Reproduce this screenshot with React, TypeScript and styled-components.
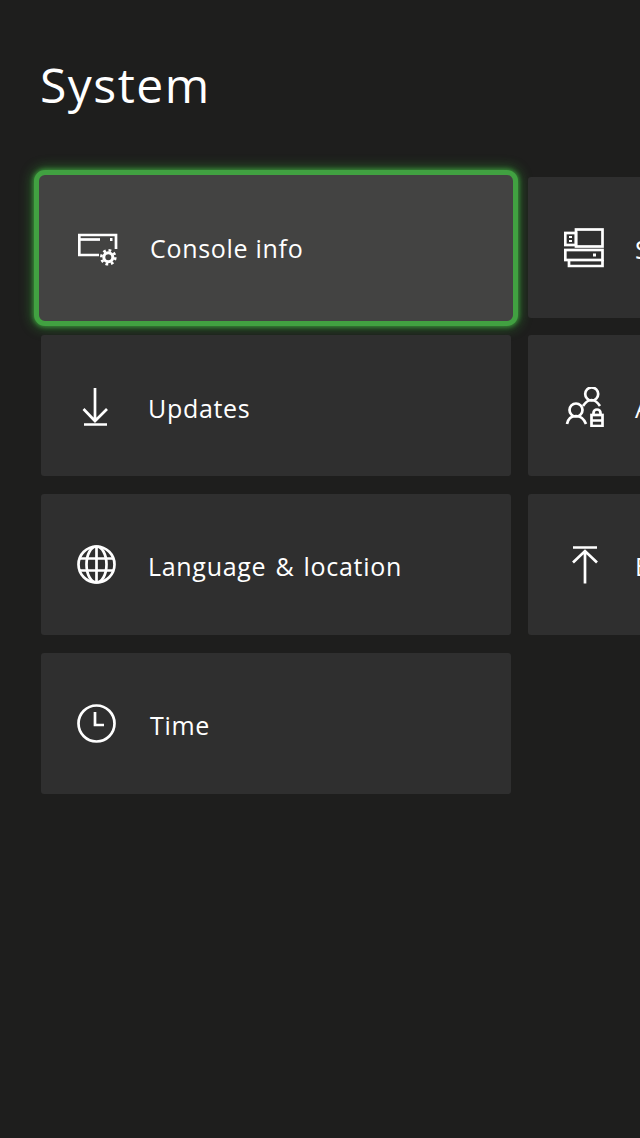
import React from 'react'
import styled, { createGlobalStyle } from 'styled-components'

const GlobalStyle = createGlobalStyle`
  html, body {
    margin: 0;
    padding: 0;
    background: #1e1e1d;
    overflow: hidden;
  }
`

const Page = styled.div`
  width: 640px;
  height: 1138px;
  overflow: hidden;
  background: #1e1e1d;
  font-family: "Open Sans", "Noto Sans", sans-serif;
  color: #fff;
  box-sizing: border-box;
  padding: 58px 0 0 41px;
`

const Title = styled.h1`
  margin: 0 0 65.500px -1px;
  font-size: 48px;
  line-height: 53px;
  font-weight: 400;
  letter-spacing: 1.500px;
`

const Grid = styled.div`
  display: grid;
  grid-template-columns: repeat(2, 470px);
  grid-auto-rows: 141px;
  column-gap: 17px;
  row-gap: 17.700px;
  width: 957px;
`

const Tile = styled.div<{ $focused?: boolean }>`
  display: flex;
  align-items: center;
  gap: 31px;
  padding: 2px 0 0 36px;
  border-radius: 3px;
  background: #2f2f2f;
  font-size: 25px;
  letter-spacing: 0.700px;
  word-spacing: 2px;
  white-space: nowrap;
  box-sizing: border-box;
  ${(p) =>
    p.$focused &&
    `
    margin: -7px -7px -8px -7px;
    padding: 0 0 2px 39px;
    gap: 32px;
    word-spacing: 0;
    background: #434342;
    border: 5px solid #41a141;
    border-radius: 11px;
    box-shadow: 0 0 4px 1px rgba(65, 170, 65, 0.7), 0 0 12px 3px rgba(50, 160, 50, 0.45);
  `}
`

const IconBox = styled.svg`
  flex: none;
  width: 40px;
  height: 40px;
  fill: none;
  stroke: #fff;
  stroke-width: 2.700;
`

const Label = styled.span<{ $inset?: number }>`
  display: block;
  padding-top: 2px;
  margin-left: ${(p) => p.$inset ?? 0}px;
`

const ConsoleIcon = () => (
  <IconBox viewBox="0 0 40 40">
    <path d="M21 28H1.300V8H38V22" />
    <path d="M1.300 12.500H22" />
    <path d="M32 12.500h2.500" strokeWidth="3" />
    <circle cx="30.300" cy="30.300" r="4.500" strokeWidth="3" />
    <circle cx="30.300" cy="30.300" r="7" strokeWidth="2.600" strokeDasharray="2.750 2.750" />
  </IconBox>
)

const DownloadIcon = () => (
  <IconBox viewBox="0 0 40 40">
    <path d="M18 1v33M6.500 22L18 34 30 22M7 37.500h23" />
  </IconBox>
)

const GlobeIcon = () => (
  <IconBox viewBox="0 0 40 40">
    <circle cx="19.500" cy="19.500" r="18" />
    <ellipse cx="19.500" cy="19.500" rx="10" ry="18" />
    <path d="M19.500 1.500v36M3 13.500h33M3 25.500h33" />
  </IconBox>
)

const ClockIcon = () => (
  <IconBox viewBox="0 0 40 40">
    <circle cx="19.500" cy="19.500" r="18" />
    <path d="M18 8v13h9" />
  </IconBox>
)

const StorageIcon = () => (
  <IconBox viewBox="0 0 40 40">
    <rect x="12" y="1.500" width="26.500" height="17" />
    <rect x="1.300" y="5" width="10.700" height="12" />
    <path d="M5 9h3M5 13h3" strokeWidth="2" />
    <rect x="1.300" y="22" width="37.200" height="10" />
    <path d="M5 32v6h33.500v-6" />
    <path d="M29 27h3" strokeWidth="3" />
  </IconBox>
)

const AccountsIcon = () => (
  <IconBox viewBox="0 0 40 40">
    <circle cx="27.700" cy="7" r="6.500" />
    <path d="M19 19c2-3 5-6 8.500-6s6.500 3 8.500 6" />
    <circle cx="12" cy="23" r="6.500" />
    <path d="M3 37c1-5 4.500-8 9-8s8 3 10 8" />
    <rect x="27.500" y="28" width="11" height="11" />
    <path d="M29.500 28v-2a3.500 3.500 0 0 1 7 0v2M27.500 33.500h11" />
  </IconBox>
)

const UploadIcon = () => (
  <IconBox viewBox="0 0 40 40">
    <path d="M9 2.500h24M21 38.500V6M9 17.500L21 6l12 11.500" />
  </IconBox>
)

const App = () => (
  <Page>
    <GlobalStyle />
    <Title>System</Title>
    <Grid>
      <Tile $focused>
        <ConsoleIcon />
        <Label>Console info</Label>
      </Tile>
      <Tile>
        <StorageIcon />
        <Label>Storage</Label>
      </Tile>
      <Tile>
        <DownloadIcon />
        <Label>Updates</Label>
      </Tile>
      <Tile>
        <AccountsIcon />
        <Label>Accounts</Label>
      </Tile>
      <Tile>
        <GlobeIcon />
        <Label>Language &amp; location</Label>
      </Tile>
      <Tile>
        <UploadIcon />
        <Label>Backup</Label>
      </Tile>
      <Tile>
        <ClockIcon />
        <Label $inset={2}>Time</Label>
      </Tile>
    </Grid>
  </Page>
)

export default App
